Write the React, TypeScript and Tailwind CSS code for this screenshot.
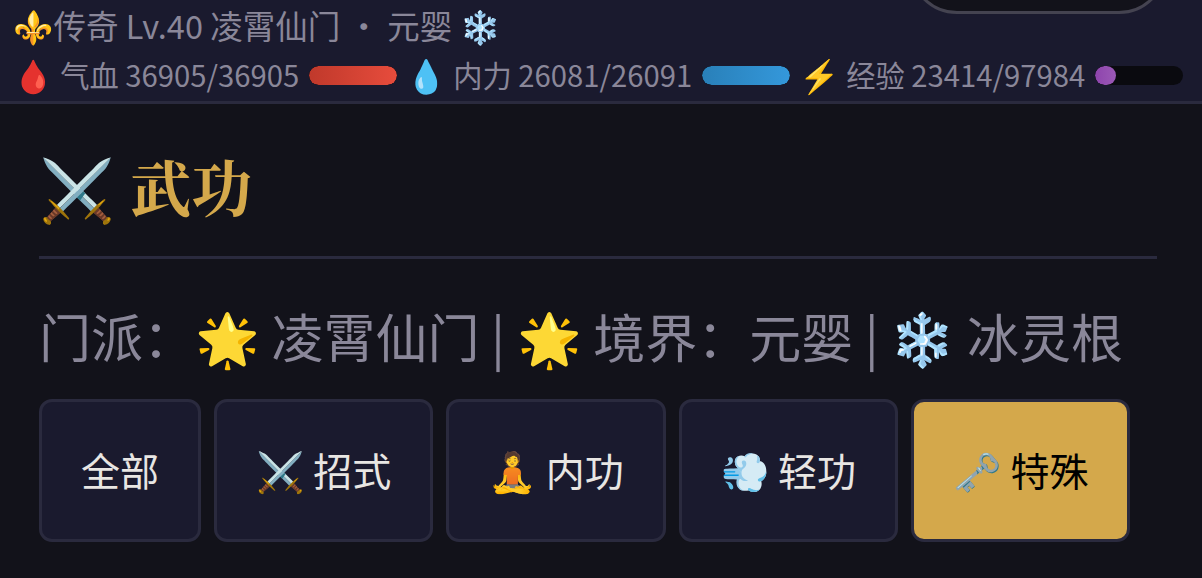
type Stat = { icon: string; label: string; value: string; fill: string };

const stats: Stat[] = [
  { icon: '🩸', label: '气血', value: '36905/36905', fill: 'w-full from-[#c0392b] to-[#e74c3c]' },
  { icon: '💧', label: '内力', value: '26081/26091', fill: 'w-full from-[#2980b9] to-[#3498db]' },
  { icon: '⚡', label: '经验', value: '23414/97984', fill: 'w-[21px] from-[#8e44ad] to-[#9b59b6]' },
];

const tabs = ['全部', '⚔️ 招式', '🧘 内功', '💨 轻功', '🗝️ 特殊'];
const activeTab = '🗝️ 特殊';

function StatusBar() {
  return (
    <header className="relative h-[104px] overflow-hidden border-b-[3px] border-[#2a2a3e] bg-[#1a1a2e] text-[#8a8799]">
      <div className="flex h-[52px] items-center whitespace-pre pl-[13px] text-[32.5px] leading-[52px]"><span className="-mt-[2px]">⚜️<span className="ml-[0.5px]">传奇 Lv.40 凌霄仙门 ・ 元婴 ❄️</span></span></div>
      <div className="flex h-[47px] items-center gap-[9.75px] pl-[13px]">
        {stats.map((s) => (
          <div key={s.label} className="flex w-[383.25px] shrink-0 items-center">
            <span className="-mt-[4px] w-[47.25px] shrink-0 text-[32.5px] leading-[47px]">{s.icon}</span>
            <span className="-mt-[2px] w-[248.75px] shrink-0 whitespace-pre text-[29.25px] leading-[47px]">{s.label} {s.value}</span>
            <div className="h-[19px] w-[88px] shrink-0 overflow-hidden rounded-full bg-[#0a0a0f]">
              <div className={`h-full rounded-full bg-linear-to-r ${s.fill}`} />
            </div>
          </div>
        ))}
      </div>
      <div className="absolute -top-[82px] left-[909px] h-[96px] w-[258px] rounded-full border-[3px] border-[#444350] bg-[#12121a]" />
    </header>
  );
}

export default function App() {
  return (
    <div className="h-[578px] overflow-hidden bg-[#12121a] font-['Noto_Sans_CJK_SC',sans-serif]">
      <StatusBar />
      <main className="px-[39px] pt-[39px]">
        <h1 className="mr-[6px] h-[116px] whitespace-pre border-b-[3px] border-[#2a2a3e] font-['Noto_Serif_CJK_SC',serif] text-[61px] font-bold leading-[86px] text-[#d4a84b]">⚔️ 武功</h1>
        <p className="mt-[39px] h-[101px] whitespace-pre text-[52px] leading-[75px] text-[#8a8799] [word-spacing:-0.1px]">门派：🌟 凌霄仙门 | 🌟 境界：元婴 | ❄️ 冰灵根</p>
        <nav className="flex gap-[13px]">
          {tabs.map((tab) => (
            <button
              key={tab}
              className={`h-[143px] shrink-0 whitespace-pre rounded-[13px] border-[3px] border-[#2a2a3e] px-[39px] pb-[2px] text-[39px] [word-spacing:-0.4px] ${
                tab === activeTab ? 'bg-[#d4a84b] text-black' : 'bg-[#1a1a2e] text-[#e8e6e3]'
              }`}
            >
              {tab}
            </button>
          ))}
        </nav>
      </main>
    </div>
  );
}
